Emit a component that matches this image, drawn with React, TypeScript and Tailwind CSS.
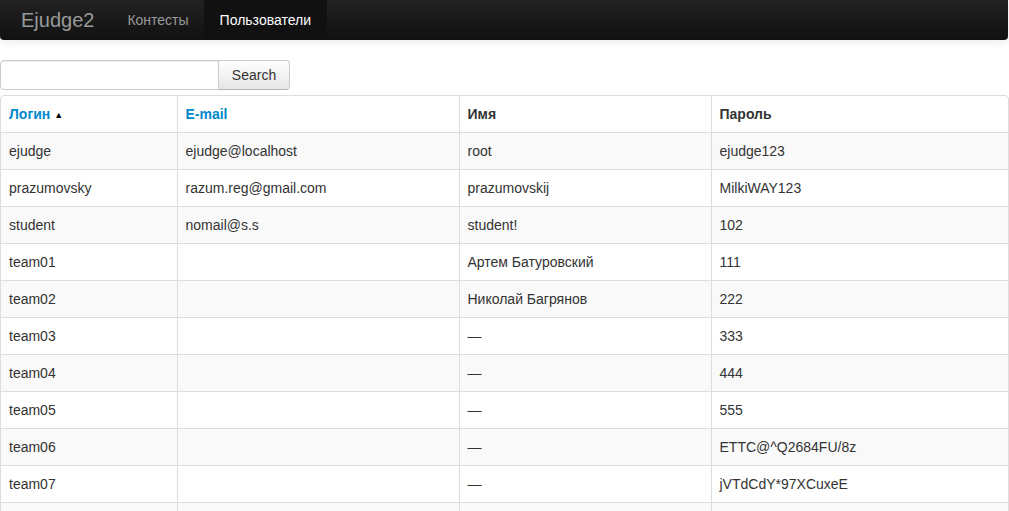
export default function App() {
  const rows: [string, string, string, string][] = [
    ["ejudge", "ejudge@localhost", "root", "ejudge123"],
    ["prazumovsky", "razum.reg@gmail.com", "prazumovskij", "MilkiWAY123"],
    ["student", "nomail@s.s", "student!", "102"],
    ["team01", "", "Артем Батуровский", "111"],
    ["team02", "", "Николай Багрянов", "222"],
    ["team03", "", "—", "333"],
    ["team04", "", "—", "444"],
    ["team05", "", "—", "555"],
    ["team06", "", "—", "ETTC@^Q2684FU/8z"],
    ["team07", "", "—", "jVTdCdY*97XCuxeE"],
    ["", "", "", ""],
  ];

  return (
    <div className="min-h-screen bg-white text-[14px] leading-5 text-[#333]" style={{ fontFamily: "'Liberation Sans', Arial, sans-serif" }}>
      <nav className="flex h-10 w-[1008px] items-stretch rounded-b-[4px] bg-gradient-to-b from-[#222222] to-[#111111] shadow-[0_1px_10px_rgba(0,0,0,0.1)]">
        <a className="flex items-center pl-[21px] pr-[18px] text-[20px] text-[#999]">Ejudge2</a>
        <a className="flex items-center px-[15px] text-[#999]">Контесты</a>
        <a className="flex items-center bg-[#111] px-[16px] text-white">Пользователи</a>
      </nav>

      <form className="mt-5 mb-[5px] flex">
        <input className="h-[30px] w-[219px] rounded-l-[4px] border border-[#ccc] bg-white px-[6px] shadow-[inset_0_1px_1px_rgba(0,0,0,0.075)] outline-none" />
        <button type="button" className="-ml-px h-[30px] w-[72px] rounded-r-[4px] border border-[#ccc] border-b-[#b3b3b3] bg-gradient-to-b from-white to-[#e6e6e6] text-[#333] shadow-[inset_0_1px_0_rgba(255,255,255,0.2)]">
          Search
        </button>
      </form>

      <div className="w-[1009px] overflow-hidden rounded-[4px] border border-[#ddd]">
        <table className="w-full table-fixed border-collapse">
          <colgroup>
            <col className="w-[176px]" />
            <col className="w-[282px]" />
            <col className="w-[252px]" />
            <col />
          </colgroup>
          <thead>
            <tr>
              <th className="h-9 px-2 py-2 text-left font-bold leading-5 text-[#0088cc]">
                Логин <span className="align-[1px] text-[9px] leading-none text-black">▲</span>
              </th>
              <th className="border-l border-[#ddd] px-2 py-2 text-left font-bold text-[#0088cc]">E-mail</th>
              <th className="border-l border-[#ddd] px-2 py-2 text-left font-bold">Имя</th>
              <th className="border-l border-[#ddd] px-2 py-2 text-left font-bold">Пароль</th>
            </tr>
          </thead>
          <tbody>
            {rows.map((r, i) => (
              <tr key={i} className={i % 2 === 0 ? "h-[37px] bg-[#f9f9f9]" : "h-[37px] bg-white"}>
                <td className="border-t border-[#ddd] px-2 py-2">{r[0]}</td>
                <td className="border-t border-l border-[#ddd] px-2 py-2">{r[1]}</td>
                <td className="border-t border-l border-[#ddd] px-2 py-2">{r[2]}</td>
                <td className="border-t border-l border-[#ddd] px-2 py-2">{r[3]}</td>
              </tr>
            ))}
          </tbody>
        </table>
      </div>
    </div>
  );
}
